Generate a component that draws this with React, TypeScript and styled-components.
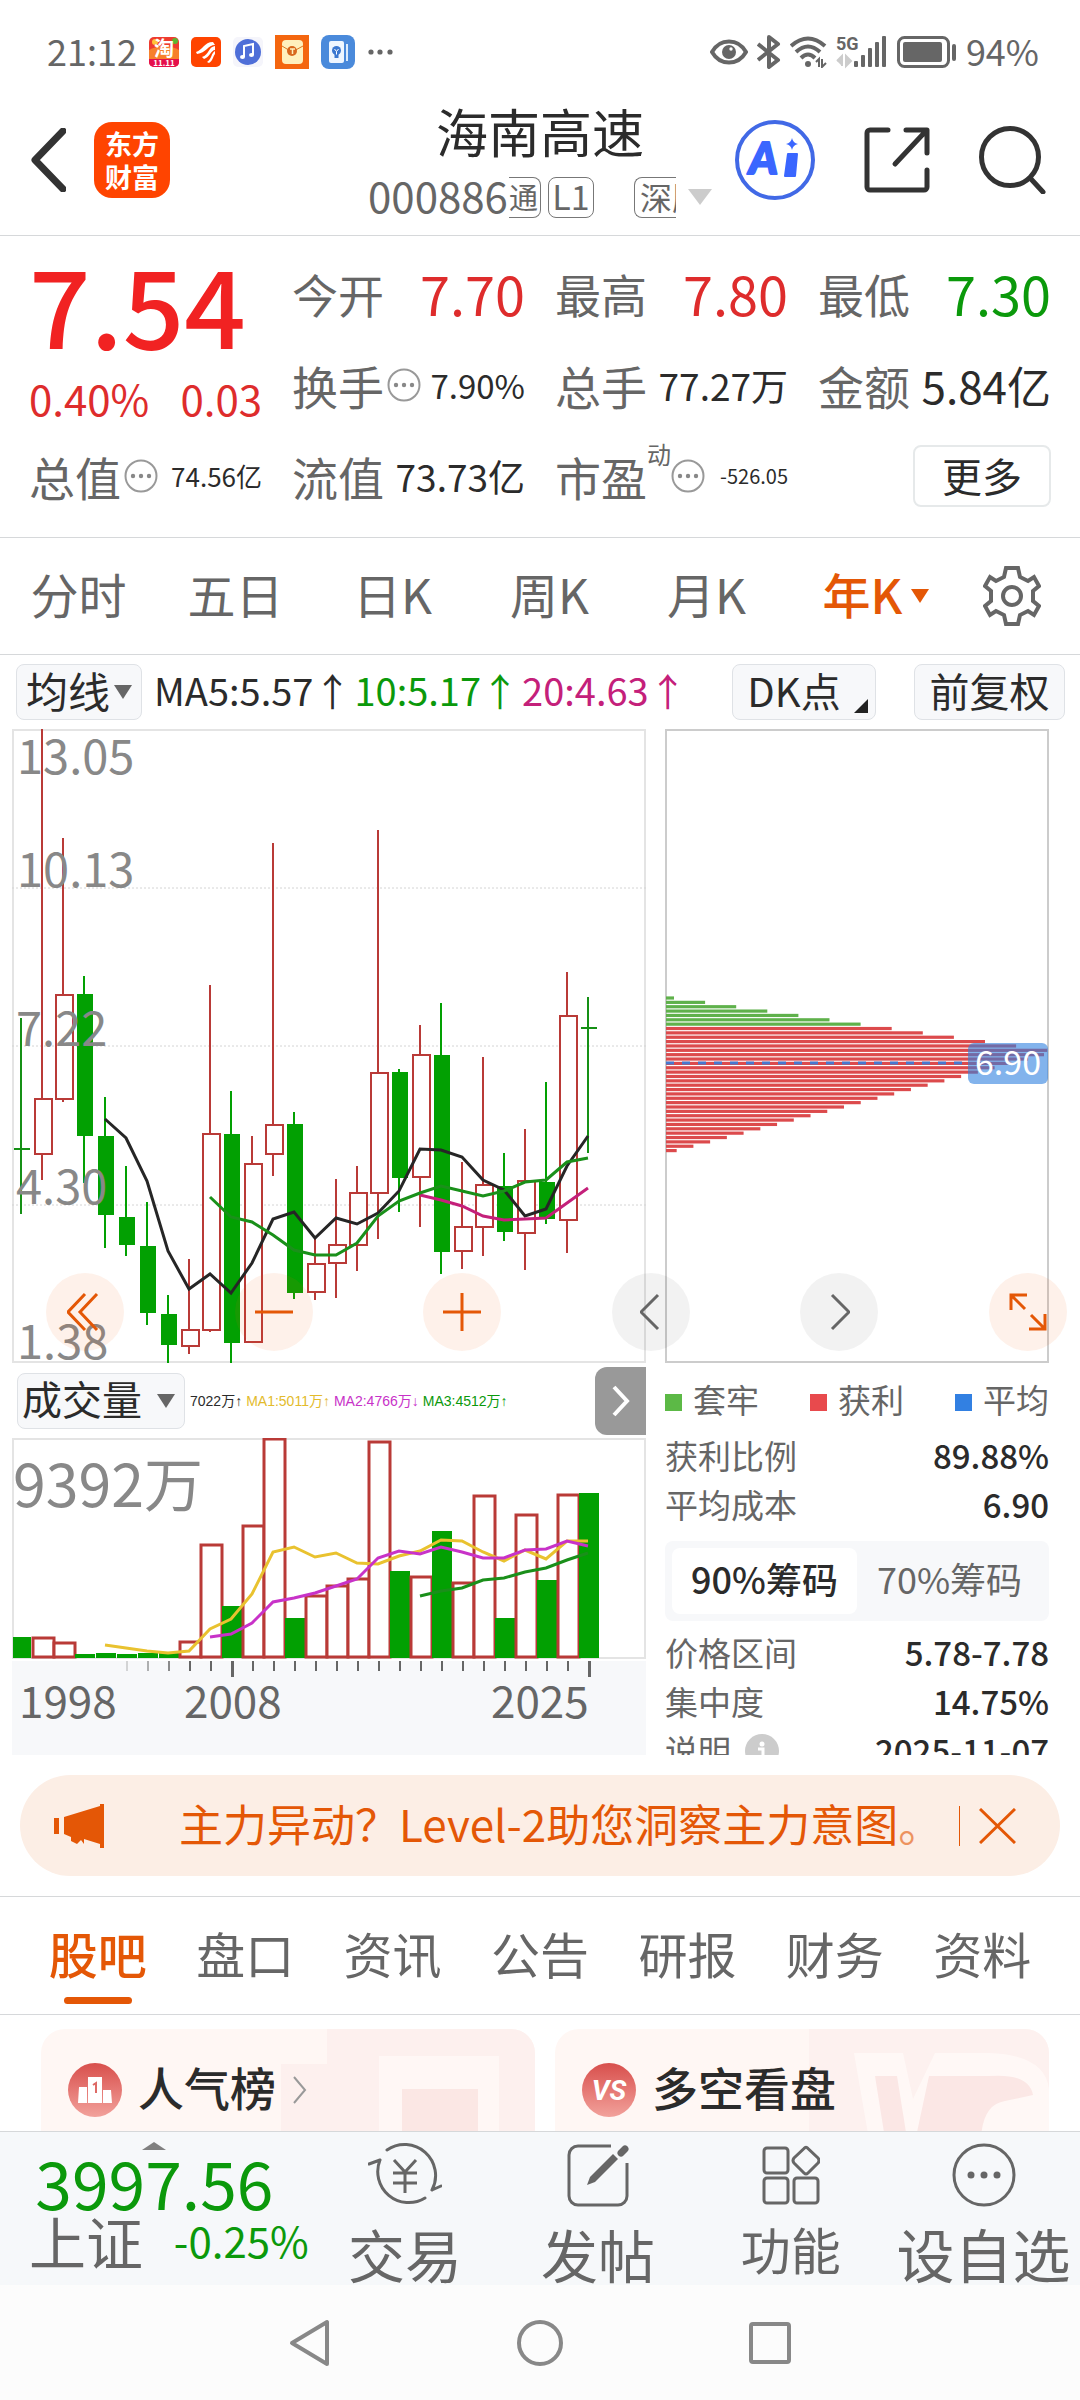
import React, { useState } from "react";
import styled, { createGlobalStyle } from "styled-components";

const color = {
  red: "#de2c2c",
  redStrong: "#f12222",
  green: "#0b990b",
  orange: "#e45706",
  text: "#2b2b2b",
  sub: "#666666",
  muted: "#888888",
  line: "#d6d8da",
  panel: "#f7f8fa",
};

const GlobalStyle = createGlobalStyle`
  * { box-sizing: border-box; }
  body {
    margin: 0;
    background: #ffffff;
    color: ${color.text};
    font-family: "Noto Sans CJK SC", "Noto Sans", sans-serif;
  }
  button, select {
    margin: 0;
    padding: 0;
    border: 0;
    background: none;
    color: inherit;
    font: inherit;
    cursor: pointer;
  }
  svg { display: block; flex: none; }
  h1, dl, dd, dt, p { margin: 0; font-weight: 400; }
`;

const Page = styled.div`
  display: flex;
  flex-direction: column;
  background: #ffffff;
`;

/* ---------- status bar ---------- */

const StatusBar = styled.div`
  display: flex;
  justify-content: space-between;
  align-items: center;
  height: 100px;
  padding: 4px 41px 0 47px;
  color: ${color.sub};
  font-size: 36px;
  line-height: 48px;
`;

const StatusGroup = styled.div<{ $gap: number }>`
  display: flex;
  align-items: center;
  gap: ${(p) => p.$gap}px;
`;

const StatusText = styled.span`
  padding-bottom: 4px;
`;

/* ---------- header ---------- */

const Header = styled.header`
  display: grid;
  grid-template-columns: 1fr auto 1fr;
  height: 136px;
  border-bottom: 1px solid ${color.line};
`;

const HeaderSide = styled.div<{ $end?: boolean }>`
  display: flex;
  align-items: center;
  justify-content: ${(p) => (p.$end ? "flex-end" : "flex-start")};
  gap: ${(p) => (p.$end ? 49 : 28)}px;
  padding: ${(p) => (p.$end ? "0 34px 16px 0" : "0 0 16px 30px")};
`;

const Logo = styled.a`
  display: flex;
  flex-direction: column;
  align-items: center;
  justify-content: center;
  width: 76px;
  height: 76px;
  border-radius: 18px;
  background: #ff4400;
  color: #ffffff;
  font-size: 27px;
  font-weight: 700;
  line-height: 33px;
  text-decoration: none;
`;

const TitleBlock = styled.div`
  display: flex;
  flex-direction: column;
  align-items: center;
`;

const StockName = styled.h1`
  font-size: 52px;
  line-height: 62px;
`;

const CodeRow = styled.div`
  display: flex;
  align-items: center;
  height: 70px;
  color: ${color.sub};
  font-size: 42px;
  line-height: 60px;
`;

const Code = styled.span`
  padding-bottom: 4px;
`;

const Tag = styled.span<{ $cut?: "left" | "right"; $size: number; $w: number; $ml: number }>`
  display: flex;
  justify-content: ${(p) => (p.$cut ? "flex-start" : "center")};
  width: ${(p) => p.$w}px;
  height: 41px;
  margin-left: ${(p) => p.$ml}px;
  overflow: hidden;
  border: 1px solid #777777;
  border-radius: 8px;
  font-size: ${(p) => p.$size}px;
  line-height: 36px;
  white-space: nowrap;
  ${(p) => p.$cut === "left" && "border-left: 0; border-top-left-radius: 0; border-bottom-left-radius: 0;"}
  ${(p) => p.$cut === "right" && "border-right: 0; border-top-right-radius: 0; border-bottom-right-radius: 0; padding-left: 5px;"}
`;

const Caret = styled.span<{ $w: number; $h: number; $color: string; $ml?: number; $up?: boolean }>`
  width: 0;
  height: 0;
  margin-left: ${(p) => p.$ml ?? 0}px;
  border-left: ${(p) => p.$w / 2}px solid transparent;
  border-right: ${(p) => p.$w / 2}px solid transparent;
  ${(p) => (p.$up ? "border-bottom" : "border-top")}: ${(p) => p.$h}px solid ${(p) => p.$color};
`;

/* ---------- quote ---------- */

const Quote = styled.section`
  display: grid;
  grid-template-columns: repeat(4, 1fr);
  grid-template-rows: 90px 93px 90px;
  column-gap: 30px;
  height: 302px;
  padding: 12px 29px 0;
  border-bottom: 1px solid ${color.line};
`;

const LastPrice = styled.div`
  grid-row: span 2;
  color: ${color.redStrong};
`;

const Price = styled.div`
  font-size: 108px;
  font-weight: 500;
  line-height: 108px;
`;

const Change = styled.div`
  display: flex;
  justify-content: space-between;
  color: ${color.red};
  font-size: 42px;
  line-height: 84px;
`;

const Cell = styled.div`
  display: flex;
  align-items: center;
  justify-content: space-between;
  white-space: nowrap;
`;

const CellLabel = styled.span`
  display: flex;
  align-items: center;
  gap: 3px;
  color: ${color.sub};
  font-size: 46px;
  line-height: 60px;
`;

const Sup = styled.sup`
  align-self: flex-start;
  margin: -6px -3px 0;
  font-size: 24px;
  line-height: 28px;
`;

const CellValue = styled.span<{ $size: number; $tone?: string }>`
  color: ${(p) => p.$tone ?? color.text};
  font-size: ${(p) => p.$size}px;
  line-height: 60px;
`;

const MoreButton = styled.button`
  justify-self: end;
  align-self: center;
  width: 138px;
  height: 62px;
  padding-bottom: 3px;
  border: 2px solid #e6e9ea;
  border-radius: 8px;
  font-size: 40px;
  line-height: 54px;
`;

/* ---------- period tabs ---------- */

const PeriodTabs = styled.nav`
  display: grid;
  grid-template-columns: repeat(5, 157fr) 182fr 89fr;
  align-items: center;
  height: 117px;
  padding-right: 24px;
  border-bottom: 1px solid ${color.line};
`;

const PeriodTab = styled.button<{ $on?: boolean }>`
  display: flex;
  align-items: center;
  justify-content: center;
  color: ${(p) => (p.$on ? color.orange : color.sub)};
  font-size: 48px;
  font-weight: ${(p) => (p.$on ? 500 : 400)};
  line-height: 72px;
`;

const PeriodLabel = styled.span`
  padding-bottom: 6px;
`;

/* ---------- chart ---------- */

const ChartTools = styled.div`
  display: flex;
  align-items: center;
  height: 74px;
  padding: 0 15px 0 16px;
`;

const SelectBox = styled.label<{ $w: number }>`
  position: relative;
  display: flex;
  align-items: center;
  width: ${(p) => p.$w}px;
  height: 56px;
  border: 1px solid #dfe2e6;
  border-radius: 8px;
  background: ${color.panel};
`;

const Select = styled.select<{ $size: number; $pad: number }>`
  appearance: none;
  flex: 1;
  min-width: 0;
  padding: 0 0 5px ${(p) => p.$pad}px;
  font-size: ${(p) => p.$size}px;
`;

const SelectArrow = styled.span`
  position: absolute;
  top: 20px;
  right: 9px;
  display: flex;
  pointer-events: none;
`;

const Averages = styled.div`
  display: flex;
  gap: 3px;
  margin-left: 12px;
  padding-bottom: 4px;
  font-size: 38px;
  line-height: 56px;
  white-space: nowrap;
`;

const Tint = styled.span<{ $c: string }>`
  color: ${(p) => p.$c};
`;

const ToolButton = styled.button<{ $w: number; $ml: string }>`
  position: relative;
  width: ${(p) => p.$w}px;
  height: 56px;
  margin-left: ${(p) => p.$ml};
  padding-bottom: 5px;
  border: 1px solid #dfe2e6;
  border-radius: 8px;
  background: ${color.panel};
  font-size: 40px;
  line-height: 48px;
`;

const ToolLabel = styled.span<{ $shift?: boolean }>`
  padding-right: ${(p) => (p.$shift ? 20 : 0)}px;
`;

const Corner = styled.span`
  position: absolute;
  right: 7px;
  bottom: 6px;
  border-left: 14px solid transparent;
  border-bottom: 14px solid #222222;
`;

const ChartGrid = styled.section`
  position: relative;
  display: grid;
  grid-template-columns: 634fr 384fr;
  column-gap: 19px;
  padding: 0 31px 0 12px;
`;

const Plot = styled.svg`
  width: 100%;
  height: auto;
`;

const PlotArea = styled.div`
  position: relative;
  grid-column: 1 / -1;
  display: grid;
  grid-template-columns: subgrid;
`;

const Controls = styled.div`
  position: absolute;
  left: 34px;
  right: -18px;
  bottom: 12px;
  display: flex;
  justify-content: space-between;
`;

const Round = styled.button<{ $grey?: boolean }>`
  display: flex;
  align-items: center;
  justify-content: center;
  width: 78px;
  height: 78px;
  border-radius: 50%;
  background: ${(p) => (p.$grey ? "rgba(0,0,0,0.05)" : "rgba(240,100,20,0.09)")};
  color: ${(p) => (p.$grey ? color.sub : color.orange)};
`;

const VolumeColumn = styled.div`
  display: flex;
  flex-direction: column;
`;

const VolumeHead = styled.div`
  display: flex;
  align-items: center;
  height: 75px;
  padding-left: 5px;
`;

const VolumeFigures = styled.div`
  display: flex;
  gap: 4px;
  margin-left: 5px;
  font-family: "Liberation Sans", "Noto Sans CJK SC", sans-serif;
  font-size: 14px;
  line-height: 28px;
  white-space: nowrap;
`;

const NextButton = styled.button`
  display: flex;
  align-items: center;
  justify-content: center;
  width: 51px;
  height: 68px;
  margin-left: auto;
  border-radius: 12px 0 0 12px;
  background: #999999;
  color: #ffffff;
`;

const ChipInfo = styled.div`
  height: 392px;
  overflow: hidden;
`;

const Legend = styled.div`
  display: flex;
  justify-content: space-between;
  padding: 12px 0 8px;
  color: ${color.sub};
  font-size: 33px;
  line-height: 48px;
`;

const LegendItem = styled.span<{ $c: string }>`
  display: flex;
  align-items: center;
  gap: 11px;
  &::before {
    content: "";
    width: 17px;
    height: 17px;
    margin-top: 6px;
    background: ${(p) => p.$c};
  }
`;

const Facts = styled.dl`
  display: grid;
  grid-template-columns: auto 1fr;
  font-size: 33px;
  line-height: 49px;
  dt { display: flex; align-items: center; gap: 14px; color: ${color.sub}; }
  dd { text-align: right; font-weight: 500; }
`;

const Toggle = styled.div`
  display: grid;
  grid-template-columns: 1fr 1fr;
  height: 80px;
  margin: 12px 0 7px;
  padding: 7px;
  border-radius: 8px;
  background: ${color.panel};
`;

const ToggleButton = styled.button<{ $on?: boolean }>`
  padding-bottom: 6px;
  border-radius: 8px;
  background: ${(p) => (p.$on ? "#ffffff" : "transparent")};
  color: ${(p) => (p.$on ? color.text : color.sub)};
  font-size: 36px;
  font-weight: ${(p) => (p.$on ? 500 : 400)};
  line-height: 60px;
`;

/* ---------- banner ---------- */

const Banner = styled.aside`
  display: flex;
  align-items: center;
  height: 101px;
  margin: 20px;
  padding: 0 44px 0 33px;
  border-radius: 51px;
  background: #fceee5;
  color: ${color.orange};
`;

const BannerText = styled.p`
  flex: 1;
  margin-left: 74px;
  padding-bottom: 6px;
  font-size: 44px;
  line-height: 64px;
  white-space: nowrap;
`;

const Faded = styled.span`
  opacity: 0.6;
`;

const BannerClose = styled.button`
  display: flex;
  padding: 2px 0 2px 19px;
  border-left: 1px solid ${color.orange};
`;

/* ---------- content tabs ---------- */

const ContentTabs = styled.nav`
  display: grid;
  grid-template-columns: repeat(7, 1fr);
  height: 119px;
  padding: 0 24px;
  border-top: 1px solid ${color.line};
  border-bottom: 1px solid ${color.line};
`;

const ContentTab = styled.button<{ $on?: boolean }>`
  display: flex;
  flex-direction: column;
  align-items: center;
  padding-top: 20px;
  color: ${(p) => (p.$on ? color.orange : color.sub)};
  font-size: 49px;
  font-weight: ${(p) => (p.$on ? 500 : 400)};
  line-height: 72px;
  &::after {
    content: "";
    width: 68px;
    height: 7px;
    margin-top: 8px;
    border-radius: 4px;
    background: ${(p) => (p.$on ? color.orange : "transparent")};
  }
`;

const Cards = styled.section`
  display: grid;
  grid-template-columns: 1fr 1fr;
  gap: 20px;
  height: 116px;
  padding: 14px 31px 0 41px;
  overflow: hidden;
`;

const Card = styled.a`
  position: relative;
  display: flex;
  align-items: center;
  gap: 16px;
  height: 122px;
  padding-left: 27px;
  overflow: hidden;
  border-radius: 24px 24px 0 0;
  background: #fff7f4;
  color: ${color.text};
  font-size: 46px;
  font-weight: 500;
  line-height: 64px;
  text-decoration: none;
  > * { position: relative; }
`;

const CardTitle = styled.span`
  padding-bottom: 8px;
`;

const CardArt = styled.svg`
  && { position: absolute; top: 0; right: 0; }
`;

/* ---------- bottom bar ---------- */

const BottomBar = styled.nav`
  display: grid;
  grid-template-columns: 309fr repeat(4, 193fr);
  height: 154px;
  overflow: hidden;
  border-top: 1px solid ${color.line};
  background: #f6f8fa;
`;

const IndexBox = styled.button`
  display: flex;
  flex-direction: column;
  align-items: center;
  padding-top: 10px;
`;

const IndexValue = styled.span`
  color: ${color.green};
  font-size: 66px;
  line-height: 62px;
`;

const IndexRow = styled.span`
  display: flex;
  align-items: center;
  justify-content: space-between;
  width: 100%;
  padding-left: 29px;
  line-height: 56px;
`;

const IndexName = styled.span`
  color: ${color.sub};
  font-size: 57px;
`;

const IndexChange = styled.span`
  color: ${color.green};
  font-size: 42px;
`;

const Action = styled.button<{ $size: number }>`
  display: flex;
  flex-direction: column;
  align-items: center;
  padding-top: 10px;
  color: ${color.sub};
  font-size: ${(p) => p.$size}px;
  line-height: ${(p) => (p.$size > 50 ? 90 : 80)}px;
  white-space: nowrap;
`;

const SystemNav = styled.nav`
  display: flex;
  justify-content: center;
  gap: 184px;
  height: 115px;
  background: #fcfcfc;
`;

const SystemButton = styled.button`
  display: flex;
  align-items: center;
  justify-content: center;
  width: 46px;
  color: ${color.muted};
`;

/* ---------- chart data ---------- */

type Candle = [up: boolean, high: number, top: number, bottom: number, low: number];

const candles: Candle[] = [
  [false, 289, 420, 420, 485], [true, 0, 370, 425, 451], [true, 109, 266, 370, 373],
  [false, 247, 265, 407, 454], [false, 368, 407, 486, 519], [false, 437, 488, 516, 527],
  [false, 473, 517, 584, 596], [false, 566, 585, 616, 634], [true, 530, 601, 617, 625],
  [true, 256, 405, 601, 603], [false, 362, 405, 614, 634], [true, 407, 435, 613, 613],
  [true, 114, 396, 425, 447], [false, 383, 395, 564, 570], [true, 508, 535, 563, 571],
  [true, 450, 516, 534, 569], [true, 437, 464, 516, 542], [true, 101, 344, 464, 510],
  [false, 340, 343, 449, 483], [true, 296, 326, 448, 498], [false, 274, 326, 523, 545],
  [true, 433, 498, 522, 540], [true, 328, 456, 498, 527], [false, 424, 457, 503, 512],
  [true, 400, 452, 504, 541], [false, 353, 453, 490, 495], [true, 243, 287, 491, 524],
  [false, 268, 299, 299, 424],
];

const ma5 = [390, 409, 452, 522, 560, 545, 564, 534, 490, 483, 509, 489, 495, 484, 462, 420, 421, 428, 451, 461, 487, 480, 437, 407];
const ma10 = [468, 488, 493, 506, 521, 526, 526, 514, 487, 472, 464, 457, 462, 467, 462, 453, 451, 433, 429];
const ma20 = [466, 471, 477, 487, 491, 490, 489, 474, 459];

const volumes = [199, 200, 205, 216, 215, 216, 215, 215, 204, 107, 168, 88, 1, 180, 158, 148, 141, 4, 133, 139, 93, 145, 58, 180, 77, 142, 57, 55];
const volUp = [0, 1, 1, 0, 0, 0, 0, 0, 1, 1, 0, 1, 1, 0, 1, 1, 1, 1, 0, 1, 0, 1, 1, 0, 1, 0, 1, 0];
const vma1 = [207, 210, 213, 215, 213, 191, 181, 156, 114, 109, 119, 115, 125, 126, 118, 113, 102, 103, 114, 123, 112, 121, 103, 103];
const vma2 = [199, 196, 185, 164, 160, 155, 148, 141, 120, 113, 116, 109, 114, 120, 120, 112, 111, 103, 108];
const vma3 = [158, 153, 150, 142, 140, 134, 130, 122, 115];

const STEP = 21;
const xAt = (i: number) => 9 + i * STEP;
const points = (ys: number[]) =>
  ys.map((y, k) => `${xAt(28 - ys.length + k)},${y}`).join(" ");

const upStroke = "#b93a37";
const downFill = "#02a002";

function KLine() {
  return (
    <Plot viewBox="0 0 634 634" role="img" aria-label="年K线图">
      <rect x="1" y="1" width="632" height="632" fill="#fff" stroke="#e4e4e4" strokeWidth="2" />
      {[159, 317, 476].map((y) => (
        <line key={y} x1="0" x2="634" y1={y} y2={y} stroke="#d4d4d4" strokeDasharray="2 2" />
      ))}
      {candles.map(([up, high, top, bottom, low], i) => {
        const x = xAt(i);
        if (top === bottom)
          return (
            <g key={i} stroke="#159015" strokeWidth="2">
              <line x1={x} x2={x} y1={high} y2={low} />
              <line x1={x - 7} x2={x + 9} y1={top} y2={top} />
            </g>
          );
        return up ? (
          <g key={i} stroke={upStroke} strokeWidth="2" fill="#fff">
            <line x1={x} x2={x} y1={high} y2={top} />
            <line x1={x} x2={x} y1={bottom} y2={low} />
            <rect x={x - 7} y={top} width="17" height={bottom - top} />
          </g>
        ) : (
          <g key={i} fill={downFill}>
            <rect x={x - 1} y={high} width="2" height={low - high} />
            <rect x={x - 7} y={top} width="16" height={bottom - top} />
          </g>
        );
      })}
      <g fill="none" strokeWidth="3">
        <polyline points={points(ma5)} stroke="#262626" />
        <polyline points={points(ma20)} stroke="#c4207a" />
        <polyline points={points(ma10)} stroke="#1a901a" />
      </g>
      <g fill={color.muted} fontSize="47">
        <text x="5" y="45">13.05</text>
        <text x="5" y="158">10.13</text>
        <text x="4" y="317">7.22</text>
        <text x="4" y="475">4.30</text>
        <text x="5" y="630">1.38</text>
      </g>
    </Plot>
  );
}

const chipRows = Array.from({ length: 36 }, (_, i) =>
  i < 13 ? 8 + i * 31.1 : i === 13 ? 378 : (32 + 50.2 * (35 - i)) / 3
);

function ChipChart() {
  return (
    <Plot viewBox="0 0 384 634" role="img" aria-label="筹码分布">
      <rect x="1" y="1" width="382" height="632" fill="#fff" stroke="#cccccc" strokeWidth="2" />
      {chipRows.map((w, i) => (
        <rect key={i} x="1" y={267.4 + i * 4.36} width={w} height="3.2" fill={i < 7 ? "#5fb14b" : "#dc4a4c"} />
      ))}
      <line x1="1" x2="304" y1="334" y2="334" stroke="#4678d0" strokeWidth="3" strokeDasharray="8 8" />
      <rect x="303" y="314" width="80" height="41" rx="6" fill="#2f80e0" fillOpacity="0.6" />
      <text x="343" y="346" fontSize="34" fill="#fff" textAnchor="middle">6.90</text>
    </Plot>
  );
}

function VolumeChart() {
  return (
    <Plot viewBox="0 0 634 317" role="img" aria-label="成交量图">
      <rect x="1" y="1" width="632" height="219" fill="#fff" stroke="#e4e4e4" strokeWidth="2" />
      {volumes.map((top, i) => {
        const x = Math.max(1, xAt(i) - 9);
        return volUp[i] ? (
          <rect key={i} x={x} y={top} width="21" height={219 - top} fill="#fff" stroke={upStroke} strokeWidth="3" />
        ) : (
          <rect key={i} x={x} y={top} width={i ? 20 : 18} height={220 - top} fill={downFill} />
        );
      })}
      <g fill="none" strokeWidth="3">
        <polyline points={points(vma3)} stroke="#1a8f1a" />
        <polyline points={points(vma1)} stroke="#e9c22f" />
        <polyline points={points(vma2)} stroke="#c832c8" />
      </g>
      <text x="1" y="69" fontSize="59" fill={color.muted}>9392万</text>
      <rect x="0" y="223" width="634" height="94" fill={color.panel} />
      {Array.from({ length: 23 }, (_, k) => {
        const i = k + 5;
        const long = i === 10 || i === 27;
        return (
          <rect key={i} x={xAt(i)} y="223" width={long ? 3 : 2} height={long ? 16 : 10} fill={color.sub} opacity={i < 8 ? (i - 4) / 4 : 1} />
        );
      })}
      <g fill={color.sub} fontSize="44">
        <text x="7" y="280">1998</text>
        <text x="172" y="280">2008</text>
        <text x="479" y="280">2025</text>
      </g>
    </Plot>
  );
}

/* ---------- icons ---------- */

const DotsCircle = () => (
  <svg width="34" height="34" viewBox="0 0 34 34">
    <circle cx="17" cy="17" r="15.5" fill="none" stroke="#999" strokeWidth="2" />
    <circle cx="9" cy="17" r="2.2" fill="#888" />
    <circle cx="17" cy="17" r="2.2" fill="#888" />
    <circle cx="25" cy="17" r="2.2" fill="#888" />
  </svg>
);

function StatusIcons() {
  return (
    <>
      <svg width="30" height="30" viewBox="0 0 30 30">
        <rect width="30" height="30" rx="5" fill="#ee3b2f" />
        <path d="M0 13 Q15 5 30 13 V22 H0z" fill="#f7802c" />
        <circle cx="6" cy="5" r="3" fill="#ffc23a" />
        <circle cx="26" cy="4" r="3" fill="#5cb531" />
        <path d="M0 22h30v3a5 5 0 0 1-5 5H5a5 5 0 0 1-5-5z" fill="#e5104c" />
        <text x="15" y="19" fontSize="20" fontWeight="700" fill="#fff" textAnchor="middle">淘</text>
        <text x="15" y="29" fontSize="8" fontWeight="700" fill="#fff" textAnchor="middle">11.11</text>
      </svg>
      <svg width="30" height="30" viewBox="0 0 30 30">
        <rect width="30" height="30" rx="5" fill="#ff4400" />
        <path d="M5 15C12 13 13 5 22 5L24 8C17 8 15 16 6 17z" fill="#fff" />
        <path d="M11 20C18 18 17 10 24 9L24 13C20 13 19 20 13 22z" fill="#fff" />
        <path d="M16 25C21 22 20 16 24 14L24 17C22 19 22 24 18 26z" fill="#fff" />
      </svg>
      <svg width="30" height="30" viewBox="0 0 30 30">
        <rect width="30" height="30" rx="5" fill="#f5f5fb" />
        <circle cx="15" cy="15" r="13" fill="#4f6fd8" />
        <path d="M11 20V9l9-2v11" fill="none" stroke="#fff" strokeWidth="2" />
        <ellipse cx="9.500" cy="20" rx="2.500" ry="2" fill="#fff" />
        <ellipse cx="18.500" cy="18" rx="2.500" ry="2" fill="#fff" />
      </svg>
      <svg width="34" height="34" viewBox="0 0 34 34">
        <rect width="34" height="34" fill="#f4660f" />
        <rect x="7" y="5" width="21" height="24" rx="4" fill="#fff0bd" />
        <path d="M7 11L17 17 28 11" fill="none" stroke="#d97822" />
        <circle cx="17" cy="16" r="5" fill="#d8681d" />
        <path d="M15 14h5M17.500 14v5" stroke="#fff0bd" strokeWidth="1.500" />
      </svg>
      <svg width="34" height="34" viewBox="0 0 34 34">
        <rect width="34" height="34" rx="8" fill="#4a8adb" />
        <rect x="8" y="6" width="15" height="22" rx="2" fill="#eef6ff" />
        <path d="M26 9v17" stroke="#dcebfb" strokeWidth="2" />
        <circle cx="15.500" cy="15.500" r="4.500" fill="#3b78d0" />
        <rect x="13.500" y="18" width="4" height="5" fill="#3b78d0" />
        <path d="M13.500 14l2 2.500 2-2.500M15.500 16.500v3" fill="none" stroke="#fff" />
      </svg>
      <svg width="26" height="10" viewBox="0 0 26 10">
        {[4, 13, 23].map((x) => <circle key={x} cx={x} cy="5" r="2.600" fill="#666" />)}
      </svg>
    </>
  );
}

function SystemIcons() {
  return (
    <>
      <svg width="38" height="26" viewBox="0 0 38 26" fill="none" stroke="#666" strokeWidth="4">
        <path d="M2 13C10-1 28-1 36 13C28 27 10 27 2 13z" />
        <circle cx="19" cy="13" r="7" fill="#666" stroke="none" />
        <circle cx="21" cy="10" r="1.700" fill="#fff" stroke="none" />
      </svg>
      <svg width="24" height="34" viewBox="0 0 24 34" fill="none" stroke="#666" strokeWidth="4" strokeLinejoin="round">
        <path d="M1 9L21 25 12 32V2L21 9 1 25" />
      </svg>
      <svg width="37" height="32" viewBox="0 0 37 32" fill="none" stroke="#666" strokeWidth="4">
        <path d="M1 10Q18-5 35 10M6 16Q18 5 30 16M11 22Q18 15 25 22" />
        <circle cx="18" cy="28" r="3" fill="#666" stroke="none" />
        <path d="M26 26l3-3v8M32 23v8l4-4" strokeWidth="2" />
      </svg>
      <svg width="52" height="34" viewBox="0 0 52 34">
        <text x="0" y="15" fontSize="18" fontWeight="700" fill="#666" fontFamily="Roboto, sans-serif">5G</text>
        <path d="M1 26l5-5v10M10 21v10l5-5z" fill="#ccc" stroke="#ccc" strokeWidth="2" />
        {[[18, 26], [25, 20], [32, 13], [39, 7], [46, 1]].map(([x, y]) => (
          <rect key={x} x={x} y={y} width="4" height={32 - y} rx="1" fill="#666" />
        ))}
      </svg>
      <svg width="60" height="32" viewBox="0 0 60 32">
        <rect x="1.500" y="1.500" width="50" height="29" rx="6" fill="none" stroke="#666" strokeWidth="3" />
        <rect x="6" y="6" width="39" height="20" rx="2" fill="#666" />
        <rect x="55" y="8" width="4" height="17" rx="2" fill="#666" />
      </svg>
    </>
  );
}

const Back = () => (
  <svg width="36" height="64" viewBox="0 0 36 64" fill="none" stroke="#333" strokeWidth="7">
    <path d="M33 3L5 32 33 61" strokeLinejoin="round" strokeLinecap="round" />
  </svg>
);

const Ai = () => (
  <svg width="80" height="82" viewBox="0 0 80 82">
    <circle cx="40" cy="41" r="38" fill="none" stroke="#4169e6" strokeWidth="4" />
    <text x="14" y="55" fontSize="44" fontWeight="900" fontStyle="italic" fill="#3a66ff" stroke="#3a66ff" strokeWidth="2" strokeLinejoin="round" fontFamily="Lato, sans-serif">A</text>
    <path d="M53 35h9l-2 22h-10z" fill="#3a66ff" stroke="#3a66ff" strokeWidth="2" strokeLinejoin="round" />
    <path d="M57 19q1 5 6 6q-5 1-6 6q-1-5-6-6q5-1 6-6z" fill="#3a66ff" />
  </svg>
);

const Share = () => (
  <svg width="66" height="66" viewBox="0 0 66 66" fill="none" stroke="#333" strokeWidth="5" strokeLinecap="round" strokeLinejoin="round">
    <path d="M24 3H6a3 3 0 0 0-3 3v54a3 3 0 0 0 3 3h54a3 3 0 0 0 3-3V43M42 3h21v23M61 5L31 37" />
  </svg>
);

const Search = () => (
  <svg width="67" height="68" viewBox="0 0 67 68" fill="none" stroke="#333" strokeWidth="5" strokeLinecap="round">
    <circle cx="31" cy="31" r="28.500" />
    <path d="M52 53L64 66" />
  </svg>
);

const Gear = () => (
  <svg width="58" height="60" viewBox="0 0 58 60" fill="none" stroke="#666" strokeWidth="4">
    <path d="M23 2H35L37 11 45 15 51 11 56 20 50 25V35L56 40 51 49 45 45 37 49 35 58H23L21 49 13 45 7 49 2 40 8 35V25L2 20 7 11 13 15 21 11z" />
    <circle cx="29" cy="30" r="9" />
  </svg>
);

const Chevron = ({ left }: { left?: boolean }) => (
  <svg width="22" height="38" viewBox="0 0 22 38" fill="none" stroke="currentColor" strokeWidth="3">
    <path d={left ? "M18 2L1 19 18 36" : "M4 2L21 19 4 36"} />
  </svg>
);

const DoubleLeft = () => (
  <svg width="36" height="40" viewBox="0 0 36 40" fill="none" stroke="currentColor" strokeWidth="3">
    <path d="M18 2L1 20 18 38M30 2L13 20 30 38" />
  </svg>
);

const PlusMinus = ({ plus }: { plus?: boolean }) => (
  <svg width="38" height="38" viewBox="0 0 38 38" stroke="currentColor" strokeWidth="3">
    <path d={plus ? "M0 19H38M19 0V38" : "M0 19H38"} />
  </svg>
);

const Expand = () => (
  <svg width="38" height="38" viewBox="0 0 38 38" fill="none" stroke="currentColor" strokeWidth="3">
    <path d="M2 17V2H18M3 3L16 16M36 21V36H20M35 35L22 22" />
  </svg>
);

const Speaker = () => (
  <svg width="52" height="44" viewBox="0 0 52 44" fill="currentColor">
    <rect x="1" y="14" width="5" height="16" />
    <path d="M11 13L47 2V0H51V44H47V40L31 35V40L28 36 24 40 18 37V33L11 30z" />
  </svg>
);

const Close = () => (
  <svg width="37" height="36" viewBox="0 0 37 36" stroke="currentColor" strokeWidth="3">
    <path d="M1 1L36 35M36 1L1 35" />
  </svg>
);

const BadgeCircle = ({ vs }: { vs?: boolean }) => (
  <svg width="54" height="54" viewBox="0 0 54 54">
    <defs>
      <linearGradient id="badge" x1="0" y1="0" x2="0" y2="1">
        <stop offset="0" stopColor="#d84f4c" />
        <stop offset="1" stopColor="#f2a19b" />
      </linearGradient>
    </defs>
    <circle cx="27" cy="27" r="27" fill="url(#badge)" />
    {vs ? (
      <text x="27" y="37" fontSize="28" fontWeight="700" fontStyle="italic" fill="#fff" textAnchor="middle" fontFamily="Roboto, sans-serif">VS</text>
    ) : (
      <g fill="#fff">
        <path d="M11 24h8v16h-9zM35 27h8l1 13h-9z" />
        <rect x="20" y="14" width="14" height="26" />
        <path d="M25 22l3-2v10" fill="none" stroke="#de6a66" strokeWidth="2" />
      </g>
    )}
  </svg>
);

const Trade = () => (
  <svg width="74" height="66" viewBox="0 0 74 66" fill="none" stroke="currentColor" strokeWidth="3">
    <path d="M19 8A31 31 0 0 1 64 48M57 56A31 31 0 0 1 12 18M1 22L12 18M64 48L73 44M1 21" strokeLinecap="round" />
    <path d="M26 18L37 30 48 18M37 30V51M25 31H49M25 41H49" />
  </svg>
);

const Post = () => (
  <svg width="62" height="66" viewBox="0 0 62 66" fill="none" stroke="currentColor" strokeWidth="3">
    <path d="M44 4H11a9 9 0 0 0-9 9V54a9 9 0 0 0 9 9H51a9 9 0 0 0 9-9V21" />
    <path d="M54 11L58 7" strokeWidth="7" strokeLinecap="round" />
    <path d="M20 43L23 35 46 12 51 17 28 40z" fill="currentColor" stroke="none" />
  </svg>
);

const Features = () => (
  <svg width="58" height="66" viewBox="0 0 58 66" fill="none" stroke="currentColor" strokeWidth="3">
    <rect x="2" y="6" width="24" height="25" rx="3" />
    <rect x="2" y="36" width="24" height="25" rx="3" />
    <rect x="32" y="36" width="24" height="25" rx="3" />
    <path d="M42 6.500Q44 4 46 6.500L56 16Q58 18.500 56 21L46 31Q44 33 42 31L32 21Q30 18.500 32 16z" />
  </svg>
);

const More = () => (
  <svg width="64" height="66" viewBox="0 0 64 66">
    <circle cx="32" cy="33" r="30" fill="none" stroke="currentColor" strokeWidth="3" />
    {[19, 32, 45].map((x) => <circle key={x} cx={x} cy="33" r="3.500" fill="currentColor" />)}
  </svg>
);

/* ---------- page ---------- */

const quoteTop = [
  ["今开", "7.70", color.red],
  ["最高", "7.80", color.red],
  ["最低", "7.30", color.green],
];
const contentTabs = ["股吧", "盘口", "资讯", "公告", "研报", "财务", "资料"];
const periods = ["分时", "五日", "日K", "周K", "月K", "年K"];

export default function App() {
  const [period, setPeriod] = useState("年K");
  const [tab, setTab] = useState("股吧");
  const [range, setRange] = useState("90%筹码");

  return (
    <Page>
      <GlobalStyle />
      <StatusBar>
        <StatusGroup $gap={12}>
          <StatusText>21:12</StatusText>
          <StatusIcons />
        </StatusGroup>
        <StatusGroup $gap={9}>
          <SystemIcons />
          <StatusText>94%</StatusText>
        </StatusGroup>
      </StatusBar>

      <Header>
        <HeaderSide>
          <button aria-label="返回"><Back /></button>
          <Logo href="#">
            <span>东方</span>
            <span>财富</span>
          </Logo>
        </HeaderSide>
        <TitleBlock>
          <StockName>海南高速</StockName>
          <CodeRow>
            <Code>000886</Code>
            <Tag $cut="left" $size={29} $w={32} $ml={1}>通</Tag>
            <Tag $size={34} $w={46} $ml={7}>L1</Tag>
            <Tag $cut="right" $size={32} $w={42} $ml={40}>深股</Tag>
            <Caret $w={24} $h={16} $color="#cccccc" $ml={12} />
          </CodeRow>
        </TitleBlock>
        <HeaderSide $end>
          <button aria-label="AI"><Ai /></button>
          <button aria-label="分享"><Share /></button>
          <button aria-label="搜索"><Search /></button>
        </HeaderSide>
      </Header>

      <Quote>
        <LastPrice>
          <Price>7.54</Price>
          <Change>
            <span>0.40%</span>
            <span>0.03</span>
          </Change>
        </LastPrice>
        {quoteTop.map(([name, value, tone]) => (
          <Cell key={name}>
            <CellLabel>{name}</CellLabel>
            <CellValue $size={54} $tone={tone}>{value}</CellValue>
          </Cell>
        ))}
        <Cell>
          <CellLabel>换手<DotsCircle /></CellLabel>
          <CellValue $size={33}>7.90%</CellValue>
        </Cell>
        <Cell>
          <CellLabel>总手</CellLabel>
          <CellValue $size={37}>77.27万</CellValue>
        </Cell>
        <Cell>
          <CellLabel>金额</CellLabel>
          <CellValue $size={44}>5.84亿</CellValue>
        </Cell>
        <Cell>
          <CellLabel>总值<DotsCircle /></CellLabel>
          <CellValue $size={26}>74.56亿</CellValue>
        </Cell>
        <Cell>
          <CellLabel>流值</CellLabel>
          <CellValue $size={37}>73.73亿</CellValue>
        </Cell>
        <Cell>
          <CellLabel>市盈<Sup>动</Sup><DotsCircle /></CellLabel>
          <CellValue $size={20}>-526.05</CellValue>
        </Cell>
        <MoreButton>更多</MoreButton>
      </Quote>

      <PeriodTabs>
        {periods.map((name) => (
          <PeriodTab key={name} $on={name === period} onClick={() => setPeriod(name)}>
            <PeriodLabel>{name}</PeriodLabel>
            {name === "年K" && <Caret $w={18} $h={14} $color={color.orange} $ml={9} />}
          </PeriodTab>
        ))}
        <PeriodTab aria-label="设置"><Gear /></PeriodTab>
      </PeriodTabs>

      <ChartTools>
        <SelectBox $w={126}>
          <Select $size={42} $pad={9} aria-label="主图指标">
            <option>均线</option>
          </Select>
          <SelectArrow><Caret $w={18} $h={14} $color={color.sub} /></SelectArrow>
        </SelectBox>
        <Averages>
          <Tint $c={color.text}>MA5:5.57↑</Tint>
          <Tint $c={color.green}>10:5.17↑</Tint>
          <Tint $c="#c4207a">20:4.63↑</Tint>
        </Averages>
        <ToolButton $w={144} $ml="auto">
          <ToolLabel $shift>DK点</ToolLabel>
          <Corner />
        </ToolButton>
        <ToolButton $w={151} $ml="38px">
          <ToolLabel>前复权</ToolLabel>
        </ToolButton>
      </ChartTools>

      <ChartGrid>
        <PlotArea>
          <KLine />
          <ChipChart />
          <Controls>
            <Round aria-label="最早"><DoubleLeft /></Round>
            <Round aria-label="缩小"><PlusMinus /></Round>
            <Round aria-label="放大"><PlusMinus plus /></Round>
            <Round $grey aria-label="向前"><Chevron left /></Round>
            <Round $grey aria-label="向后"><Chevron /></Round>
            <Round aria-label="全屏"><Expand /></Round>
          </Controls>
        </PlotArea>
        <VolumeColumn>
          <VolumeHead>
            <SelectBox $w={168}>
              <Select $size={40} $pad={4} aria-label="副图指标">
                <option>成交量</option>
              </Select>
              <SelectArrow><Caret $w={18} $h={14} $color={color.sub} /></SelectArrow>
            </SelectBox>
            <VolumeFigures>
              <Tint $c={color.text}>7022万↑</Tint>
              <Tint $c="#e3bb2c">MA1:5011万↑</Tint>
              <Tint $c="#c832c8">MA2:4766万↓</Tint>
              <Tint $c={color.green}>MA3:4512万↑</Tint>
            </VolumeFigures>
            <NextButton aria-label="更多指标">
              <svg width="18" height="32" viewBox="0 0 18 32" fill="none" stroke="currentColor" strokeWidth="4">
                <path d="M2 2L15 16 2 30" />
              </svg>
            </NextButton>
          </VolumeHead>
          <VolumeChart />
        </VolumeColumn>
        <ChipInfo>
          <Legend>
            <LegendItem $c="#5cb946">套牢</LegendItem>
            <LegendItem $c="#e84a4d">获利</LegendItem>
            <LegendItem $c="#3280e2">平均</LegendItem>
          </Legend>
          <Facts>
            <dt>获利比例</dt>
            <dd>89.88%</dd>
            <dt>平均成本</dt>
            <dd>6.90</dd>
          </Facts>
          <Toggle>
            {["90%筹码", "70%筹码"].map((name) => (
              <ToggleButton key={name} $on={name === range} onClick={() => setRange(name)}>
                {name}
              </ToggleButton>
            ))}
          </Toggle>
          <Facts>
            <dt>价格区间</dt>
            <dd>5.78-7.78</dd>
            <dt>集中度</dt>
            <dd>14.75%</dd>
            <dt>
              说明
              <svg width="34" height="34" viewBox="0 0 34 34">
                <circle cx="17" cy="17" r="17" fill="#cccccc" />
                <circle cx="17" cy="10" r="2.500" fill="#fff" />
                <path d="M13 15h5v11M13 26h9" fill="none" stroke="#fff" strokeWidth="3" />
              </svg>
            </dt>
            <dd>2025-11-07</dd>
          </Facts>
        </ChipInfo>
      </ChartGrid>

      <Banner>
        <Speaker />
        <BannerText>主力异动？Level-2助您洞察主力意图<Faded>。</Faded></BannerText>
        <BannerClose aria-label="关闭"><Close /></BannerClose>
      </Banner>

      <ContentTabs>
        {contentTabs.map((name) => (
          <ContentTab key={name} $on={name === tab} onClick={() => setTab(name)}>
            {name}
          </ContentTab>
        ))}
      </ContentTabs>

      <Cards>
        <Card href="#">
          <CardArt width="256" height="122" viewBox="0 0 256 122" aria-hidden="true">
            <path d="M2 122V35H48V0H256V122z" fill="#fdf0ee" />
            <path d="M100 122V27H220V122H177V60H123V122z" fill="#fff7f5" />
            <rect x="123" y="60" width="76" height="62" fill="#fbe7e4" />
          </CardArt>
          <BadgeCircle />
          <CardTitle>人气榜</CardTitle>
          <svg width="16" height="28" viewBox="0 0 16 28" fill="none" stroke="#999" strokeWidth="2">
            <path d="M2 1L13 14 2 27" />
          </svg>
        </Card>
        <Card href="#">
          <CardArt width="240" height="122" viewBox="0 0 240 122" aria-hidden="true">
            <rect width="240" height="122" fill="#fdf1ef" />
            <path d="M45 24H94L104 70 126 24H180Q236 26 240 60V122H150V62L116 122H62z" fill="#fff8f6" />
            <path d="M66 47H88L100 122H78zM120 47H180Q220 44 224 66L196 72Q170 76 172 122H104z" fill="#fbe7e5" />
          </CardArt>
          <BadgeCircle vs />
          <CardTitle>多空看盘</CardTitle>
        </Card>
      </Cards>

      <BottomBar>
        <IndexBox>
          <Caret $w={24} $h={8} $color="#808080" $up />
          <IndexValue>3997.56</IndexValue>
          <IndexRow>
            <IndexName>上证</IndexName>
            <IndexChange>-0.25%</IndexChange>
          </IndexRow>
        </IndexBox>
        <Action $size={57}><Trade />交易</Action>
        <Action $size={57}><Post />发帖</Action>
        <Action $size={50}><Features />功能</Action>
        <Action $size={58}><More />设自选</Action>
      </BottomBar>

      <SystemNav>
        <SystemButton aria-label="系统返回">
          <svg width="42" height="48" viewBox="0 0 42 48" fill="none" stroke="currentColor" strokeWidth="4" strokeLinejoin="round">
            <path d="M38 3V45L3 24z" />
          </svg>
        </SystemButton>
        <SystemButton aria-label="主屏幕">
          <svg width="46" height="46" viewBox="0 0 46 46" fill="none" stroke="currentColor" strokeWidth="4">
            <circle cx="23" cy="23" r="21" />
          </svg>
        </SystemButton>
        <SystemButton aria-label="最近任务">
          <svg width="42" height="42" viewBox="0 0 42 42" fill="none" stroke="currentColor" strokeWidth="4">
            <rect x="2" y="2" width="38" height="38" rx="2" />
          </svg>
        </SystemButton>
      </SystemNav>
    </Page>
  );
}
